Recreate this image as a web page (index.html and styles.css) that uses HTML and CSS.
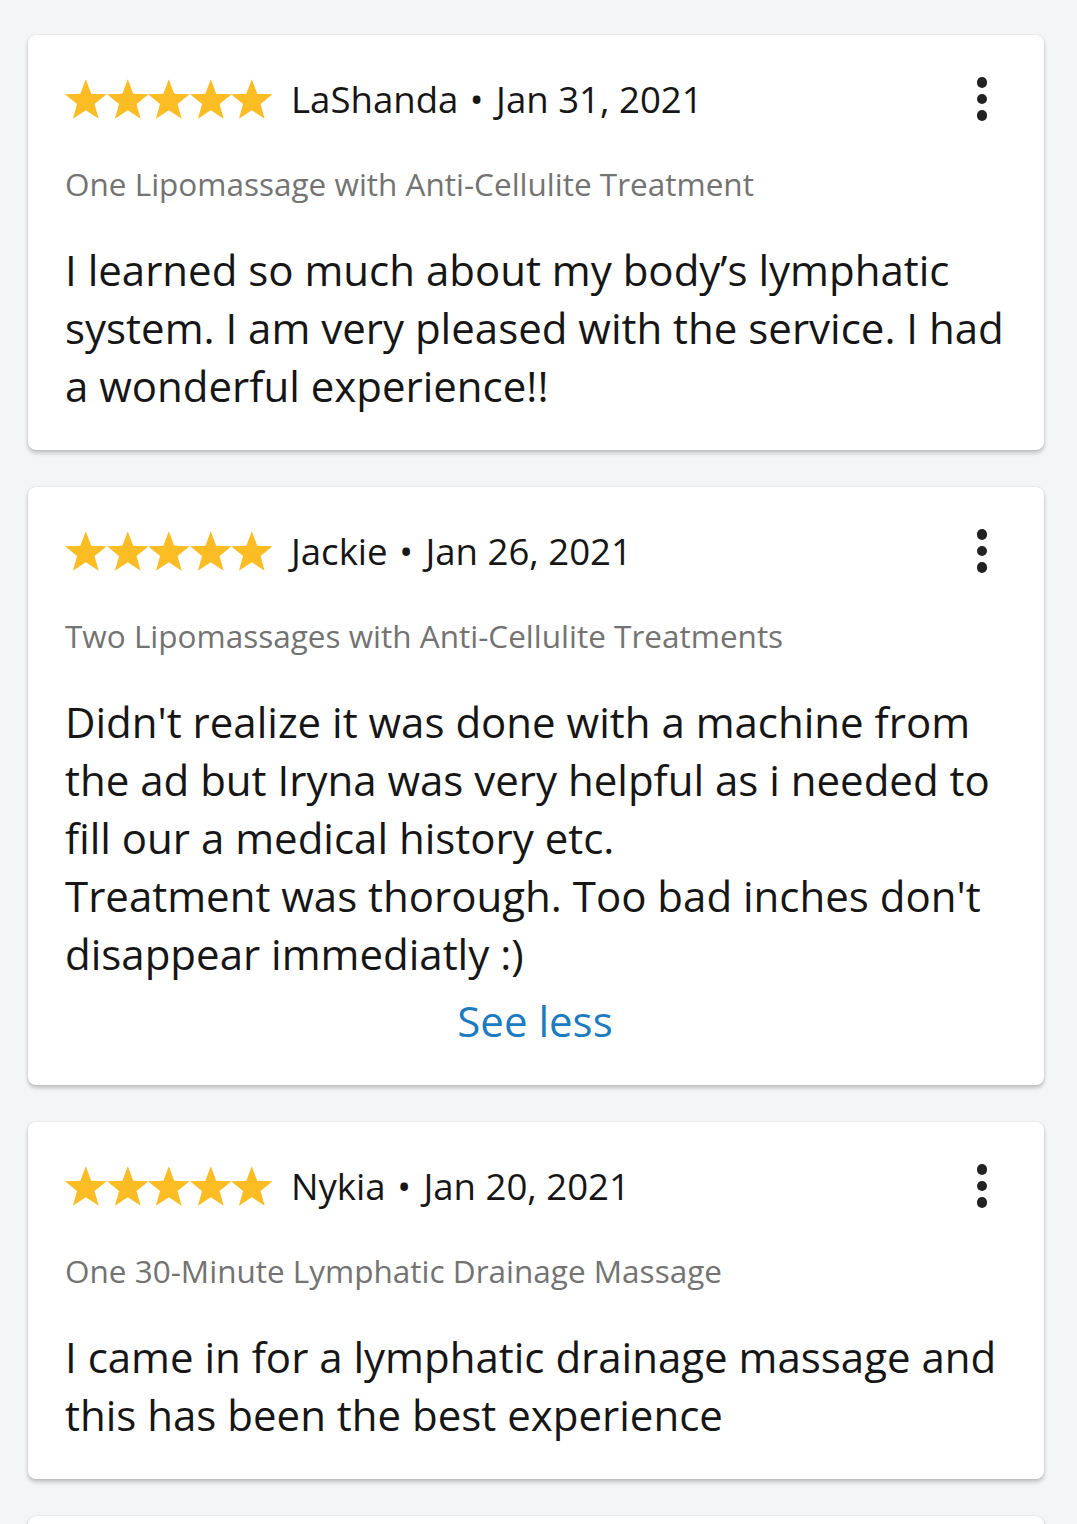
FILE: index.html
```html
<!DOCTYPE html>
<html>
<head>
<meta charset="utf-8">
<link rel="stylesheet" href="styles.css">
</head>
<body>
<svg width="0" height="0" class="defs">
  <defs>
    <polygon id="star" points="21,0 26.47,14.58 42,15.27 29.84,24.97 34,40 21,31.4 8,40 12.16,24.97 0,15.27 15.53,14.58"/>
  </defs>
</svg>
<div class="list">
  <div class="card stub"></div>

  <div class="card">
    <div class="head">
      <div class="stars">
        <svg viewBox="0 0 42 40"><use href="#star"/></svg><svg viewBox="0 0 42 40"><use href="#star"/></svg><svg viewBox="0 0 42 40"><use href="#star"/></svg><svg viewBox="0 0 42 40"><use href="#star"/></svg><svg viewBox="0 0 42 40"><use href="#star"/></svg>
      </div>
      <div class="meta">LaShanda <span class="dot">•</span> Jan 31, 2021</div>
      <div class="more"><span></span><span></span><span></span></div>
    </div>
    <div class="product">One Lipomassage with Anti-Cellulite Treatment</div>
    <div class="text">I learned so much about my body’s lymphatic system. I am very pleased with the service. I had a wonderful experience!!</div>
  </div>

  <div class="card">
    <div class="head">
      <div class="stars">
        <svg viewBox="0 0 42 40"><use href="#star"/></svg><svg viewBox="0 0 42 40"><use href="#star"/></svg><svg viewBox="0 0 42 40"><use href="#star"/></svg><svg viewBox="0 0 42 40"><use href="#star"/></svg><svg viewBox="0 0 42 40"><use href="#star"/></svg>
      </div>
      <div class="meta">Jackie <span class="dot">•</span> Jan 26, 2021</div>
      <div class="more"><span></span><span></span><span></span></div>
    </div>
    <div class="product">Two Lipomassages with Anti-Cellulite Treatments</div>
    <div class="text">Didn't realize it was done with a machine from the ad but Iryna was very helpful as i needed to fill our a medical history etc.<br>Treatment was thorough. Too bad inches don't disappear immediatly :)</div>
    <div class="seeless">See less</div>
  </div>

  <div class="card">
    <div class="head">
      <div class="stars">
        <svg viewBox="0 0 42 40"><use href="#star"/></svg><svg viewBox="0 0 42 40"><use href="#star"/></svg><svg viewBox="0 0 42 40"><use href="#star"/></svg><svg viewBox="0 0 42 40"><use href="#star"/></svg><svg viewBox="0 0 42 40"><use href="#star"/></svg>
      </div>
      <div class="meta">Nykia <span class="dot">•</span> Jan 20, 2021</div>
      <div class="more"><span></span><span></span><span></span></div>
    </div>
    <div class="product">One 30-Minute Lymphatic Drainage Massage</div>
    <div class="text">I came in for a lymphatic drainage massage and this has been the best experience</div>
  </div>

  <div class="card next"></div>
</div>
</body>
</html>
```

FILE: styles.css
```css
html, body {
  margin: 0;
  padding: 0;
  background: #f4f5f7;
  font-family: "Open Sans", "Noto Sans", sans-serif;
  color: #161616;
  overflow: hidden;
}
.defs { position: absolute; }
.list {
  display: flex;
  flex-direction: column;
  gap: 37px;
  padding-left: 28px;
  width: 1016px;
}
.card {
  background: #fff;
  border-radius: 8px;
  box-shadow: 0 0 2px rgba(0,0,0,0.12), 0 3px 4px rgba(0,0,0,0.22);
  padding: 36px 28px 35px 37px;
}
.card.stub {
  height: 0;
  padding: 0;
  margin-top: -2px;
}
.card.next { height: 60px; }
.head {
  display: flex;
  align-items: center;
  height: 56px;
}
.stars {
  display: flex;
  fill: #fbbc24;
}
.stars svg {
  width: 41.6px;
  height: 40px;
  display: block;
}
.meta {
  font-size: 36.6px;
  margin-left: 18px;
  flex: 1;
  white-space: nowrap;
}
.meta .dot {
  margin: 0 3px 0 2px;
}
.more {
  display: flex;
  flex-direction: column;
  gap: 6px;
  align-items: center;
  margin-right: 29px;
}
.more span {
  width: 10.5px;
  height: 10.5px;
  border-radius: 50%;
  background: #222;
}
.product {
  font-size: 31.5px;
  color: #737373;
  line-height: 40px;
  margin-top: 37px;
}
.text {
  font-size: 42px;
  line-height: 58px;
  margin-top: 37px;
}
.seeless {
  font-size: 42px;
  line-height: 58px;
  color: #1d7bbf;
  text-align: center;
  margin-top: 9px;
  padding-right: 11px;
}
```
